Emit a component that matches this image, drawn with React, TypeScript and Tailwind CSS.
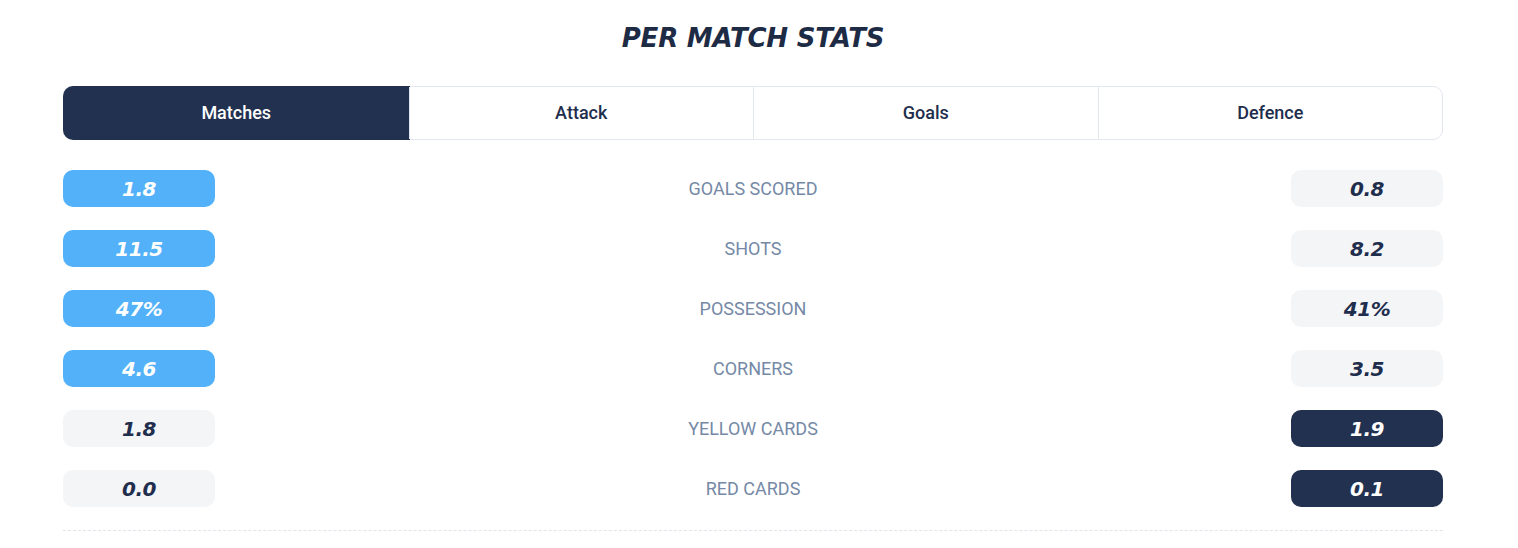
import React from "react";

type Tone = "blue" | "gray" | "dark";

interface StatRow {
    label: string;
    home: string;
    away: string;
    homeTone: Tone;
    awayTone: Tone;
}

const tabs = ["Matches", "Attack", "Goals", "Defence"];

const rows: StatRow[] = [
    { label: "Goals Scored", home: "1.8", away: "0.8", homeTone: "blue", awayTone: "gray" },
    { label: "Shots", home: "11.5", away: "8.2", homeTone: "blue", awayTone: "gray" },
    { label: "Possession", home: "47%", away: "41%", homeTone: "blue", awayTone: "gray" },
    { label: "Corners", home: "4.6", away: "3.5", homeTone: "blue", awayTone: "gray" },
    { label: "Yellow Cards", home: "1.8", away: "1.9", homeTone: "gray", awayTone: "dark" },
    { label: "Red Cards", home: "0.0", away: "0.1", homeTone: "gray", awayTone: "dark" },
];

const toneClass: Record<Tone, string> = {
    blue: "bg-[#52b1f9] text-white",
    gray: "bg-[#f4f5f7] text-[#1f2e4d]",
    dark: "bg-[#22314f] text-white",
};

function Pill({ value, tone }: { value: string; tone: Tone }) {
    return (
        <div
            className={`flex h-[37px] w-[152px] items-center justify-center rounded-[10px] font-['DejaVu_Sans',sans-serif] text-[20px] font-bold italic tracking-[-0.5px] ${toneClass[tone]}`}
        >
            {value}
        </div>
    );
}

export default function App() {
    return (
        <div className="min-h-[548px] bg-white pl-[63px] pr-[75px] pt-[22px]">
            {/* Title */}
            <h1 className="text-center font-['DejaVu_Sans',sans-serif] text-[26px] font-bold italic leading-[32px] tracking-[-0.2px] text-[#1e2b45]">
                PER MATCH STATS
            </h1>

            {/* Tabs */}
            <div className="mt-[32px] grid h-[54px] grid-cols-4 rounded-[10px] border border-[#e3e7ee] font-['Roboto',sans-serif] text-[18px] font-medium">
                {tabs.map((tab, i) => (
                    <div
                        key={tab}
                        className={
                            i === 0
                                ? "-m-px flex items-center justify-center rounded-l-[10px] bg-[#22314f] pb-[2px] text-white"
                                : "flex items-center justify-center border-l border-[#e3e7ee] pb-[2px] text-[#1f2e4d]"
                        }
                    >
                        {tab}
                    </div>
                ))}
            </div>

            {/* Stat rows */}
            <div className="mt-[30px] flex flex-col gap-[23px]">
                {rows.map((row) => (
                    <div key={row.label} className="flex items-center justify-between">
                        <Pill value={row.home} tone={row.homeTone} />
                        <span className="font-['Roboto',sans-serif] text-[18px] uppercase text-[#7589a6]">
                            {row.label}
                        </span>
                        <Pill value={row.away} tone={row.awayTone} />
                    </div>
                ))}
            </div>

            <div className="mt-[23px] border-t border-dashed border-[#e2e4ec]" />
        </div>
    );
}
